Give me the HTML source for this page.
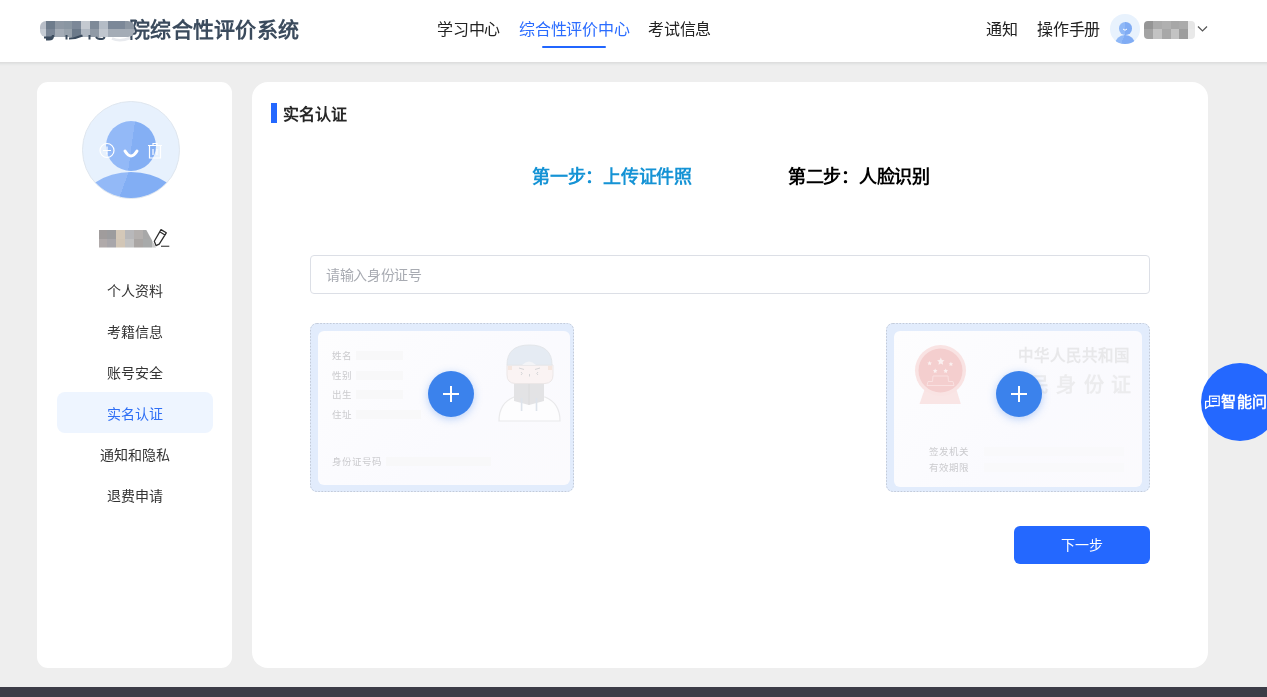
<!DOCTYPE html>
<html lang="zh-CN"><head><meta charset="utf-8">
<style>
*{margin:0;padding:0;box-sizing:border-box;}
html,body{width:1267px;height:697px;overflow:hidden;}
div{will-change:transform;}
body{text-spacing-trim:space-all;background:#eeeeee;font-family:"Liberation Sans",sans-serif;position:relative;color:#333;}
.abs{position:absolute;}
.header{position:absolute;left:0;top:0;width:1267px;height:62px;background:#fff;z-index:2;}
.hshadow{position:absolute;left:-20px;top:0;width:1307px;height:62px;box-shadow:0 1.5px 3px rgba(30,40,40,0.10);z-index:1;}
.title{position:absolute;left:128.5px;top:16px;font-size:21px;letter-spacing:0.3px;font-weight:bold;color:#3b4b5d;line-height:28px;white-space:nowrap;}
.nav{position:absolute;top:19px;font-size:16px;letter-spacing:-0.22px;line-height:22px;color:#222;white-space:nowrap;}
.nav.active{color:#2a6cff;}
.uline{position:absolute;left:542px;top:46px;width:64px;height:2px;background:#2166ff;border-radius:1px;}
.card{position:absolute;background:#fff;}
.left{left:37px;top:82px;width:195px;height:586px;border-radius:11px;}
.right{left:252px;top:82px;width:956px;height:586px;border-radius:16px;}
.menu{position:absolute;left:37px;width:195px;text-align:center;font-size:14px;line-height:20px;color:#333;}
.footer{position:absolute;left:0;top:687px;width:1267px;height:10px;background:#3c3c47;}
.idc{width:264px;height:169px;border-radius:7px;background:#e2ecfc;}
.dash{position:absolute;left:0;top:0;}
.inner{position:absolute;border-radius:6px;background:linear-gradient(135deg,#fdfdfe,#fafafe 60%,#fbfafd);}
.lbl{position:absolute;font-size:9.5px;line-height:12px;color:#cbcbce;white-space:nowrap;}
.bar{position:absolute;height:9px;background:#f8f8f9;}
.plus{position:absolute;width:46px;height:46px;border-radius:50%;background:#3b82ec;box-shadow:0 2px 8px rgba(59,130,236,0.35);}
.plus:before{content:"";position:absolute;left:15px;top:22px;width:16px;height:2px;background:#fff;}
.plus:after{content:"";position:absolute;left:22px;top:15px;width:2px;height:16px;background:#fff;}
</style></head>
<body>
<div class="hshadow"></div>
<div class="header">
  <div class="title">院综合性评价系统</div>
  <div class="abs" style="left:40px;top:20.5px;width:94px;height:16px;border-radius:6px;overflow:hidden;display:grid;grid-template-columns:6px repeat(10,1fr);grid-template-rows:1fr 1fr;"><div style="background:#b8bec8"></div><div style="background:#6e7c8c"></div><div style="background:#8e98a4"></div><div style="background:#8a96a2"></div><div style="background:#7c8898"></div><div style="background:#c4c9d0"></div><div style="background:#7e8a98"></div><div style="background:#b4bcc6"></div><div style="background:#7c8898"></div><div style="background:#7c8898"></div><div style="background:#8c96a2"></div><div style="background:#c6ccd4"></div><div style="background:#7a8696"></div><div style="background:#a4acb6"></div><div style="background:#98a2ac"></div><div style="background:#6c7a8a"></div><div style="background:#b0b8c2"></div><div style="background:#909aa6"></div><div style="background:#c0c6ce"></div><div style="background:#a4acb6"></div><div style="background:#a4acb6"></div><div style="background:#a4acb6"></div></div>
  <svg class="abs" style="left:40px;top:34px" width="100" height="8" viewBox="0 0 100 8">
    <path d="M4 3.5 H10 Q13 3.5 13 1 V2 Q13 5.5 9 5.5 H6" stroke="#3b4b5d" stroke-width="2" fill="none"/>
    <path d="M26.5 1 V5.5 M29 4.5 Q36 4.5 42.5 1.5" stroke="#3b4b5d" stroke-width="2" fill="none"/>
    <path d="M49.5 1 V5.5 M56 3 Q57 5 62 5 Q64 5 64.5 3" stroke="#3b4b5d" stroke-width="2" fill="none"/>
    <path d="M72 4.5 Q80 8 90 4" stroke="#e8eaee" stroke-width="2.5" fill="none"/>
  </svg>
  <div class="nav" style="left:437px;">学习中心</div>
  <div class="nav active" style="left:519px;">综合性评价中心</div>
  <div class="nav" style="left:648px;">考试信息</div>
  <div class="uline"></div>
  <div class="nav" style="left:986px;">通知</div>
  <div class="nav" style="left:1037px;">操作手册</div>
  <div class="abs" style="left:1110px;top:13.5px;width:29.5px;height:29.5px;border-radius:50%;background:#e8f2fd;overflow:hidden;">
    <div class="abs" style="left:8.5px;top:7.5px;width:12.5px;height:12.5px;border-radius:50%;background:linear-gradient(90deg,#8fb8f7 0 50%,#80acf4 50%);"></div>
    <svg class="abs" style="left:12px;top:14px" width="6" height="4" viewBox="0 0 6 4"><path d="M1 1 Q3 3.5 5 1" stroke="#fff" stroke-width="1" fill="none"/></svg>
    <div class="abs" style="left:5px;top:20.5px;width:19.5px;height:19px;border-radius:50%;background:linear-gradient(110deg,#8fb8f7 0 35%,#80acf4 35%);"></div>
  </div>
  <div class="abs" style="left:1144px;top:21px;width:51px;height:17.5px;border-radius:4px;overflow:hidden;display:grid;grid-template-columns:9px 9px 9px 8px 9px 7px;grid-template-rows:8px 9.5px;"><div style="background:#959595"></div><div style="background:#ababab"></div><div style="background:#b0b0b0"></div><div style="background:#a7a7a7"></div><div style="background:#aaaaaa"></div><div style="background:#e6e6e6"></div><div style="background:#a3a3a3"></div><div style="background:#c3c3c3"></div><div style="background:#a8a8a8"></div><div style="background:#c3c3c3"></div><div style="background:#9d9d9d"></div><div style="background:#e9e9e9"></div></div>
  <svg class="abs" style="left:1197px;top:25px" width="11" height="8" viewBox="0 0 11 8"><path d="M1 1.5 L5.5 6 L10 1.5" stroke="#555" stroke-width="1.2" fill="none"/></svg>
</div>

<div class="card left"></div>
<div class="card right"></div>

<!-- left card content -->
<div class="abs" style="left:82px;top:101px;width:97.5px;height:97.5px;border-radius:50%;background:#e7f1fd;overflow:hidden;border:0.5px solid #dfe6ee;">
  <div class="abs" style="left:22.5px;top:18.5px;width:50px;height:50px;border-radius:50%;background:linear-gradient(98deg,#93b9f7 0 51%,#84aff4 51%);"></div>
  <div class="abs" style="left:-2px;top:70px;width:100px;height:70px;border-radius:50%;background:linear-gradient(110deg,#93b9f7 0 38%,#82aef4 38%);"></div>
  <svg class="abs" style="left:-1.5px;top:-1.5px" width="98" height="98" viewBox="0 0 98 98">
    <circle cx="25" cy="49.5" r="7" stroke="#fff" stroke-width="1.2" fill="none"/>
    <path d="M25 45.5 V53.5 M21 49.5 H29" stroke="#fff" stroke-width="1.2"/>
    <path d="M43 50 Q49 60 55 50" stroke="#fff" stroke-width="3" fill="none" stroke-linecap="round"/>
    <path d="M66 44.5 H80 M71 44.5 V42.5 H75 V44.5 M67.5 45 V57 H78.5 V45 M71 48 V54 M75 48 V54" stroke="#fff" stroke-width="1.2" fill="none"/>
  </svg>
</div>
<div class="abs" style="left:99px;top:230.3px;width:57px;height:17.4px;clip-path:polygon(0 0,83% 0,100% 100%,0 100%);display:grid;grid-template-columns:8.2px 9.2px 8.9px 8.9px 8.9px 8.9px 4px;grid-template-rows:1fr 1fr;"><div style="background:#a09c9c"></div><div style="background:#9c9c9e"></div><div style="background:#d4c8b8"></div><div style="background:#b8b8ba"></div><div style="background:#b4b0ae"></div><div style="background:#a8a8a8"></div><div style="background:#c6c6c6"></div><div style="background:#b0aaaa"></div><div style="background:#a8a6aa"></div><div style="background:#d2c6b6"></div><div style="background:#c2c2c2"></div><div style="background:#aaa6a4"></div><div style="background:#a8aaaa"></div><div style="background:#c8c8c8"></div></div>
<svg class="abs" style="left:152px;top:228px" width="20" height="20" viewBox="0 0 20 20">
  <path d="M9 1.6 L14.3 4.8 L7.2 16.1 L4 17.6 L2.3 13.3 Z M7.7 3.8 L13 7" stroke="#2a2a2a" stroke-width="1.25" fill="none" stroke-linejoin="round"/>
  <path d="M9 18.3 H17.3" stroke="#555" stroke-width="1.3"/>
</svg>
<div class="menu" style="top:281px;">个人资料</div>
<div class="menu" style="top:322px;">考籍信息</div>
<div class="menu" style="top:363px;">账号安全</div>
<div class="abs" style="left:57px;top:392px;width:156px;height:41px;border-radius:8px;background:#eef5ff;"></div>
<div class="menu" style="top:404px;color:#2f6ff5;">实名认证</div>
<div class="menu" style="top:445px;">通知和隐私</div>
<div class="menu" style="top:486px;">退费申请</div>

<!-- right card content -->
<div class="abs" style="left:271px;top:103px;width:6px;height:20px;background:#2468ff;"></div>
<div class="abs" style="left:283px;top:104px;font-size:16px;line-height:22px;font-weight:bold;color:#262626;">实名认证</div>
<div class="abs" style="left:532px;top:165px;font-size:18px;letter-spacing:-0.25px;line-height:24px;font-weight:bold;color:#1593d5;white-space:nowrap;">第一步：上传证件照</div>
<div class="abs" style="left:788px;top:165px;font-size:18px;letter-spacing:-0.3px;line-height:24px;font-weight:bold;color:#000;white-space:nowrap;">第二步：人脸识别</div>
<div class="abs" style="left:310px;top:255px;width:840px;height:39px;border:1px solid #dcdfe6;border-radius:4px;"></div>
<div class="abs" style="left:325.5px;top:265px;font-size:14px;letter-spacing:-0.35px;line-height:20px;color:#a8abb2;">请输入身份证号</div>
<div class="abs" style="left:1014px;top:526px;width:136px;height:38px;border-radius:6px;background:#2468ff;color:#fff;font-size:14px;line-height:38px;text-align:center;">下一步</div>


<!-- id card 1 -->
<div class="abs idc" style="left:310px;top:323px;">
  <svg class="dash" width="264" height="169"><rect x="0.5" y="0.5" width="263" height="168" rx="6.5" fill="none" stroke="#c3cbd9" stroke-width="1" stroke-dasharray="1.7 1.5"/></svg>
  <div class="inner" style="left:8px;top:7.5px;width:252px;height:154px;">
    <div class="lbl" style="left:14px;top:19px;">姓名</div><div class="bar" style="left:38px;top:20px;width:47px;"></div>
    <div class="lbl" style="left:14px;top:39px;">性别</div><div class="bar" style="left:38px;top:40px;width:47px;"></div>
    <div class="lbl" style="left:14px;top:58px;">出生</div><div class="bar" style="left:38px;top:59px;width:47px;"></div>
    <div class="lbl" style="left:14px;top:78px;">住址</div><div class="bar" style="left:38px;top:79px;width:65px;"></div>
    <div class="lbl" style="left:14px;top:125px;">身份证号码</div><div class="bar" style="left:68px;top:126px;width:105px;"></div>
    <svg class="abs" style="left:172px;top:4px" width="80" height="90" viewBox="0 0 80 90">
      <path d="M9 86 Q9 68 24 62 L55 62 Q70 68 70 86 Z" fill="#fdfdfe" stroke="#e9e9eb" stroke-width="1.2"/>
      <path d="M24 47 H54 V66 L39 70 L24 66 Z" fill="#e3e3e5"/>
      <path d="M39 49 V70" stroke="#d9d9db" stroke-width="0.8"/>
      <path d="M31.6 63 V76 M46.5 63 V76" stroke="#dde3eb" stroke-width="1.6"/>
      <path d="M17 30 H63 V40 Q63 48 55 48.5 H25 Q17 48 17 40 Z" fill="#faf3f3" stroke="#ece7e7" stroke-width="1"/>
      <path d="M18 31 h4 v4 h-4z M58 31 h4 v4 h-4z" fill="#f5e6df"/>
      <path d="M17 30 Q17 10 39.5 10 Q62 10 62 30 Z" fill="#e5ebf3" stroke="#e3e6ea" stroke-width="1"/>
      <path d="M32 30 Q39 23 46 30 Z" fill="#f3f4f7"/>
      <path d="M29 33 L34 34.5 M45 34.5 L50 33 M31 37 Q33.5 38.5 31 40 M48 37 Q45.5 38.5 48 40 M39.5 39 V41.5" stroke="#d6d6d8" stroke-width="1" fill="none"/>
    </svg>
  </div>
  <div class="plus" style="left:118px;top:47.5px;"></div>
</div>
<!-- id card 2 -->
<div class="abs idc" style="left:886px;top:323px;">
  <svg class="dash" width="264" height="169"><rect x="0.5" y="0.5" width="263" height="168" rx="6.5" fill="none" stroke="#c3cbd9" stroke-width="1" stroke-dasharray="1.7 1.5"/></svg>
  <div class="inner" style="left:8px;top:8px;width:248px;height:156px;">
    <svg class="abs" style="left:20px;top:14px" width="54" height="62" viewBox="0 0 54 62">
      <path d="M10.7 44 L42.3 44 L46.8 59 L5.5 59 Z" fill="#f9e5e5"/>
      <circle cx="26.5" cy="25.5" r="25.5" fill="#f9e3e3"/>
      <circle cx="26.5" cy="25.5" r="22" fill="#f4cece"/>
      <g fill="#fbf0f0">
        <path d="M26.8 12.6 l1.1 2.4 2.6.3-1.9 1.8.5 2.6-2.3-1.3-2.3 1.3.5-2.6-1.9-1.8 2.6-.3z"/>
        <path d="M15.6 15.9 l.7 1.5 1.6.2-1.2 1.1.3 1.6-1.4-.8-1.4.8.3-1.6-1.2-1.1 1.6-.2z"/>
        <path d="M36.9 16.7 l.7 1.5 1.6.2-1.2 1.1.3 1.6-1.4-.8-1.4.8.3-1.6-1.2-1.1 1.6-.2z"/>
        <path d="M21.2 23.6 l.7 1.5 1.6.2-1.2 1.1.3 1.6-1.4-.8-1.4.8.3-1.6-1.2-1.1 1.6-.2z"/>
        <path d="M31.7 23.6 l.7 1.5 1.6.2-1.2 1.1.3 1.6-1.4-.8-1.4.8.3-1.6-1.2-1.1 1.6-.2z"/>
      </g>
      <path d="M13 40.5 L14 36.5 L18.5 36.5 L19 31 L34 31 L34.5 36.5 L39 36.5 L40 40.5 Z" fill="none" stroke="#f9e2e2" stroke-width="0.9"/>
    </svg>
    <div class="abs" style="left:124px;top:15px;font-family:'Liberation Serif',serif;font-weight:bold;font-size:15.5px;line-height:20px;color:#e8e8ea;white-space:nowrap;">中华人民共和国</div>
    <div class="abs" style="left:107px;top:42px;font-family:'Liberation Serif',serif;font-weight:bold;font-size:20px;line-height:24px;letter-spacing:7.6px;color:#ececee;white-space:nowrap;">居民身份证</div>
    <div class="lbl" style="left:35px;top:115px;">签发机关</div><div class="bar" style="left:90px;top:116px;width:140px;background:#f9f9fb;"></div>
    <div class="lbl" style="left:35px;top:131px;">有效期限</div><div class="bar" style="left:90px;top:132px;width:140px;background:#f9f9fb;"></div>
  </div>
  <div class="plus" style="left:110px;top:47.5px;"></div>
</div>
<!-- float -->
<div class="abs" style="left:1201px;top:363px;width:78px;height:78px;border-radius:50%;background:#2468ff;"></div>
<svg class="abs" style="left:1204px;top:395px" width="17" height="15" viewBox="0 0 17 15">
  <path d="M5.6 1 H15.2 V10.6 H5.6 Z M7.8 3.7 H13 M7.8 6.3 H13" stroke="#fff" stroke-width="1.25" fill="none"/>
  <path d="M5.6 6.3 H1.6 V13.6 L4.4 11.2 H9.6 V10.6" stroke="#fff" stroke-width="1.25" fill="none" stroke-linejoin="round"/>
</svg>
<div class="abs" style="left:1220.5px;top:392px;font-size:15px;letter-spacing:0.5px;line-height:20px;font-weight:bold;color:#fff;white-space:nowrap;">智能问答</div>
<div class="footer"></div>
</body></html>
